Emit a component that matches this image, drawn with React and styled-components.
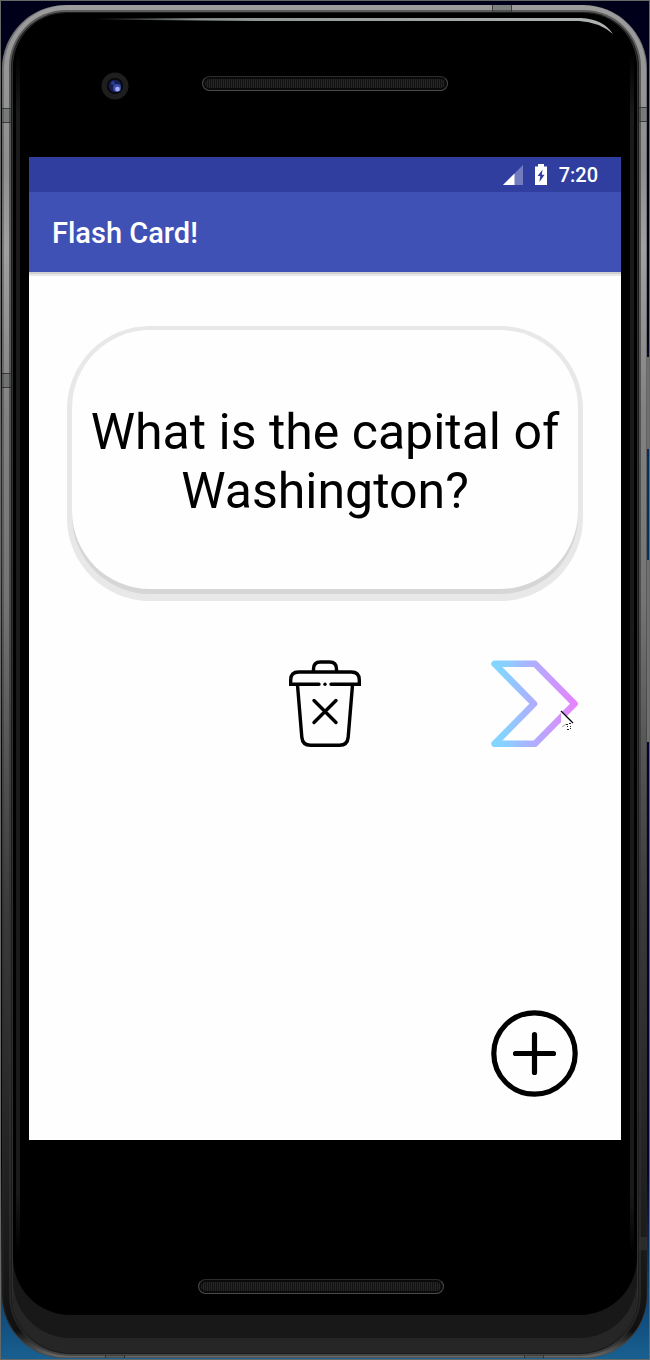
import React from "react";
import styled, { createGlobalStyle } from "styled-components";

const GlobalStyle = createGlobalStyle`
  *, *::before, *::after { box-sizing: border-box; }
  body {
    margin: 0;
    font-family: Roboto, "Liberation Sans", sans-serif;
    color: #000;
  }
`;

/* ---------- desktop and device ---------- */

const Desktop = styled.div`
  display: flex;
  min-height: 100vh;
  padding: 4px 2px 1px 1px;
  border: 1px solid #666866;
  background: linear-gradient(#00001a 0%, #01011c 25%, #06305c 34%, #06305c 41%, #02022c 56%, #02022c 86%, #0a3a6c 94%, #186090 100%);
`;

const Phone = styled.div`
  position: relative;
  flex: 1;
  display: flex;
  flex-direction: column;
  padding: 8px 9px 5px 10px;
  border-radius: 64px 64px 62px 62px;
  background: linear-gradient(#9c9c9c 0%, #8e8e8e 12%, #a0a0a0 18%, #828282 30%, #747474 44%, #565656 55%, #3c3c3c 66%, #2a2a2a 80%, #1a1a1a 92%, #101010 98%, #6c6c6c 100%);
  box-shadow: inset 2px 0 0 rgba(40, 40, 40, 0.35), inset -1px 0 0 rgba(40, 40, 40, 0.35), inset 0 -1px 0 #555;
`;

const Glass = styled.div`
  position: relative;
  flex: 1;
  display: flex;
  flex-direction: column;
  padding: 0 16px;
  border: solid #303030;
  border-width: 0 1px;
  border-radius: 54px 54px 58px 58px;
  background: #000;
  box-shadow: 0 0 0 1px #1c1c1c, 0 0 0 3px rgba(50, 50, 50, 0.6), inset 0 -15px 0 #262626, inset 0 -38px 0 #181818;
`;

const Sheen = styled.div`
  position: absolute;
  top: 40px;
  bottom: 100px;
  ${({ $side }) => $side}: 3px;
  width: 4px;
  background: linear-gradient(transparent, #1a1a1a 5%, #1a1a1a 95%, transparent);
`;

const TopGlare = styled.svg`
  position: absolute;
  top: 0;
  left: 0;
  width: 100%;
  height: 30px;
`;

const AntennaBand = styled.div`
  position: absolute;
  ${({ $edge }) => $edge}: 0;
  ${({ $edge, $at }) => ($edge === "left" || $edge === "right" ? `top: ${$at};` : `left: ${$at};`)}
  ${({ $edge }) =>
    $edge === "left" || $edge === "right"
      ? "width: 10px; height: 15px; border-width: 1px 0;"
      : `width: 20px; height: ${$edge === "top" ? 7 : 3}px; border-width: 0 1px;`}
  border-style: solid;
  border-color: rgba(20, 20, 20, 0.6);
  background: rgba(70, 76, 74, 0.35);
`;

const SideKey = styled.div`
  position: absolute;
  right: -2px;
  top: ${({ $top }) => $top};
  height: ${({ $length }) => $length};
  width: 2px;
  background: #707070;
`;

const Bezel = styled.div`
  display: grid;
  grid-template-columns: 1fr 246px 1fr;
  justify-items: center;
  align-items: center;
`;

const TopBezel = styled(Bezel)`
  height: 144px;
  padding-bottom: 3px;
`;

const BottomBezel = styled(Bezel)`
  height: 213px;
  padding: 80px 8px 0 0;
`;

const Speaker = styled.div`
  grid-column: 2;
  width: 100%;
  height: 15px;
  border: 1px solid #4a4a4a;
  border-top-color: #2c2c2c;
  border-radius: 8px;
  background: repeating-linear-gradient(90deg, #262624 0 1px, #121212 1px 2px);
  box-shadow: inset 0 0 0 2px #0a0a0a;
`;

const Camera = () => (
  <svg width="30" height="32" viewBox="0 0 30 32" aria-hidden="true">
    <circle cx="14" cy="18" r="13.500" fill="#1e1e1e" />
    <circle cx="14" cy="18" r="8" fill="#050508" />
    <circle cx="14" cy="18" r="6.500" fill="#141c4c" />
    <circle cx="12" cy="15" r="2" fill="#2a3c8c" />
    <circle cx="16" cy="20" r="4" fill="#3c4cac" />
    <circle cx="16.500" cy="21" r="2.300" fill="#aab0f4" />
  </svg>
);

/* ---------- app ---------- */

const Screen = styled.div`
  flex: 1;
  display: flex;
  flex-direction: column;
  background: #fefefe;
`;

const StatusBar = styled.div`
  display: flex;
  align-items: center;
  justify-content: flex-end;
  gap: 12px;
  height: 35px;
  padding: 0 23px;
  background: #303f9f;
  color: #fff;
  font-size: 20px;
  font-weight: 500;
  line-height: 24px;
`;

const Clock = styled.time``;

const AppBar = styled.header`
  display: flex;
  align-items: center;
  height: 80px;
  padding: 2px 23px 0;
  background: #3f51b5;
  box-shadow: 0 2px 0 #d0d0d0, 0 4px 0 #e8e8e8;
`;

const Title = styled.h1`
  margin: 0;
  color: #fff;
  font-size: 29px;
  font-weight: 500;
  line-height: 34px;
`;

const Main = styled.main`
  flex: 1;
  display: flex;
  flex-direction: column;
  padding: 58px 43px 43px;
`;

const Card = styled.section`
  display: flex;
  align-items: center;
  justify-content: center;
  min-height: 259px;
  padding: 4px 10px 0;
  border-radius: 78px;
  background: #fefefe;
  box-shadow: 0 5px 0 #d6d6d6, 0 1px 0 5px #e8e8e8, 0 7px 0 5px #e8e8e8;
`;

const Question = styled.p`
  margin: 0;
  font-size: 50px;
  line-height: 59px;
  text-align: center;
`;

const Actions = styled.div`
  display: grid;
  grid-template-columns: 1fr auto 1fr;
  margin-top: 71px;
`;

const IconButton = styled.button`
  display: block;
  width: 87px;
  height: 87px;
  padding: 0;
  border: 0;
  background: none;
  grid-column: ${({ $column }) => $column};
  justify-self: end;
  cursor: pointer;

  svg {
    display: block;
  }
`;

const Footer = styled.footer`
  display: flex;
  justify-content: flex-end;
  margin-top: auto;
`;

const SignalIcon = () => (
  <svg width="20" height="20" viewBox="0 0 20 20" aria-hidden="true">
    <path d="M0 20 L20 0 V20 Z" fill="#fff" fillOpacity=".32" />
    <path d="M0 20 L11.500 8.500 V20 Z" fill="#fff" />
  </svg>
);

const BatteryIcon = () => (
  <svg width="12" height="21" viewBox="0 0 12 21" aria-hidden="true">
    <path d="M3 0 H9 V2.500 H12 V21 H0 V2.500 H3 Z" fill="#fff" />
    <path d="M7.600 5.500 L2.600 12 H5.200 L4.400 18 L9.600 10.800 H6.800 Z" fill="#303f9f" />
  </svg>
);

const TrashIcon = () => (
  <svg width="87" height="87" viewBox="0 0 87 87" fill="none" stroke="#000" strokeWidth="3.4" strokeLinecap="round" aria-hidden="true">
    <path d="M31.500 11.500 V9 Q31.500 2 38.500 2 H47.500 Q54.500 2 54.500 9 V11.500" />
    <path d="M37 24.300 H8.700 V20 Q8.700 12 16.700 12 H69.300 Q77.300 12 77.300 20 V24.300 H49" />
    <circle cx="43" cy="24.300" r="1.700" fill="#000" stroke="none" />
    <path d="M15.500 25 L19.800 77 Q20.500 85.200 28.500 85.200 H57.500 Q65.500 85.200 66.200 77 L70.500 25" />
    <path d="M32 40.500 L54 62.500 M54 40.500 L32 62.500" />
  </svg>
);

const NextIcon = () => (
  <svg width="87" height="87" viewBox="0 0 87 87" fill="none" aria-hidden="true">
    <defs>
      <linearGradient id="next-tint" gradientUnits="userSpaceOnUse" x1="0" y1="43" x2="87" y2="43">
        <stop offset="0" stopColor="#80d8ff" />
        <stop offset=".16" stopColor="#88d1ff" />
        <stop offset=".4" stopColor="#a6b6ff" />
        <stop offset=".7" stopColor="#c89bff" />
        <stop offset="1" stopColor="#ea80fc" />
      </linearGradient>
    </defs>
    <path
      d="M3.500 3.800 H44 L83.500 43.800 L44 83.800 H3.500 L43 43.800 Z"
      stroke="url(#next-tint)"
      strokeWidth="6.600"
      strokeLinejoin="round"
    />
    <path d="M70 51 L82 63 V70 H70 Z" fill="#fefefe" />
    <path d="M70 51 L82 63" stroke="#000" strokeWidth="1.200" />
    <path d="M71 67 L75 64" stroke="#bbb" strokeWidth="1.200" />
    <path d="M75 64.500 h2 M78 63.500 h2 M76 66.500 h1 M79 66.500 h1 M76 69.500 h2 M79 68.500 h1" stroke="#222" strokeWidth="1" />
  </svg>
);

const AddIcon = () => (
  <svg width="87" height="87" viewBox="0 0 87 87" fill="none" stroke="#000" strokeWidth="5.2" strokeLinecap="round" aria-hidden="true">
    <circle cx="43.500" cy="43.500" r="40.700" />
    <path d="M24.500 43.500 H62.500 M43.500 24.500 V62.500" />
  </svg>
);

export default function App() {
  return (
    <>
      <GlobalStyle />
      <Desktop>
        <Phone>
          <AntennaBand $edge="top" $at="76%" />
          <AntennaBand $edge="left" $at="103px" />
          <AntennaBand $edge="right" $at="102px" />
          <AntennaBand $edge="left" $at="368px" />
          <AntennaBand $edge="right" $at="91%" />
          <AntennaBand $edge="bottom" $at="16%" />
          <AntennaBand $edge="bottom" $at="81%" />
          <SideKey $top="26%" $length="92px" />
          <SideKey $top="41%" $length="182px" />
          <Glass>
            <TopGlare viewBox="0 0 626 30" preserveAspectRatio="none" aria-hidden="true">
              <defs>
                <linearGradient id="glare" x1="0" x2="1">
                  <stop offset="0" stopColor="#8c9494" stopOpacity="0" />
                  <stop offset=".2" stopColor="#8c9494" />
                  <stop offset="1" stopColor="#b0b4b4" />
                </linearGradient>
              </defs>
              <path d="M80 5.500 L250 5 H570 Q592 6 602 21 Q588 9 568 8 H250 L80 6.500 Z" fill="url(#glare)" />
            </TopGlare>
            <Sheen $side="left" />
            <Sheen $side="right" />
            <TopBezel>
              <Camera />
              <Speaker />
            </TopBezel>
            <Screen>
              <StatusBar>
                <SignalIcon />
                <BatteryIcon />
                <Clock>7:20</Clock>
              </StatusBar>
              <AppBar>
                <Title>Flash Card!</Title>
              </AppBar>
              <Main>
                <Card>
                  <Question>What is the capital of Washington?</Question>
                </Card>
                <Actions>
                  <IconButton $column={2} type="button" aria-label="Delete card">
                    <TrashIcon />
                  </IconButton>
                  <IconButton $column={3} type="button" aria-label="Next card">
                    <NextIcon />
                  </IconButton>
                </Actions>
                <Footer>
                  <IconButton type="button" aria-label="Add card">
                    <AddIcon />
                  </IconButton>
                </Footer>
              </Main>
            </Screen>
            <BottomBezel>
              <Speaker />
            </BottomBezel>
          </Glass>
        </Phone>
      </Desktop>
    </>
  );
}
